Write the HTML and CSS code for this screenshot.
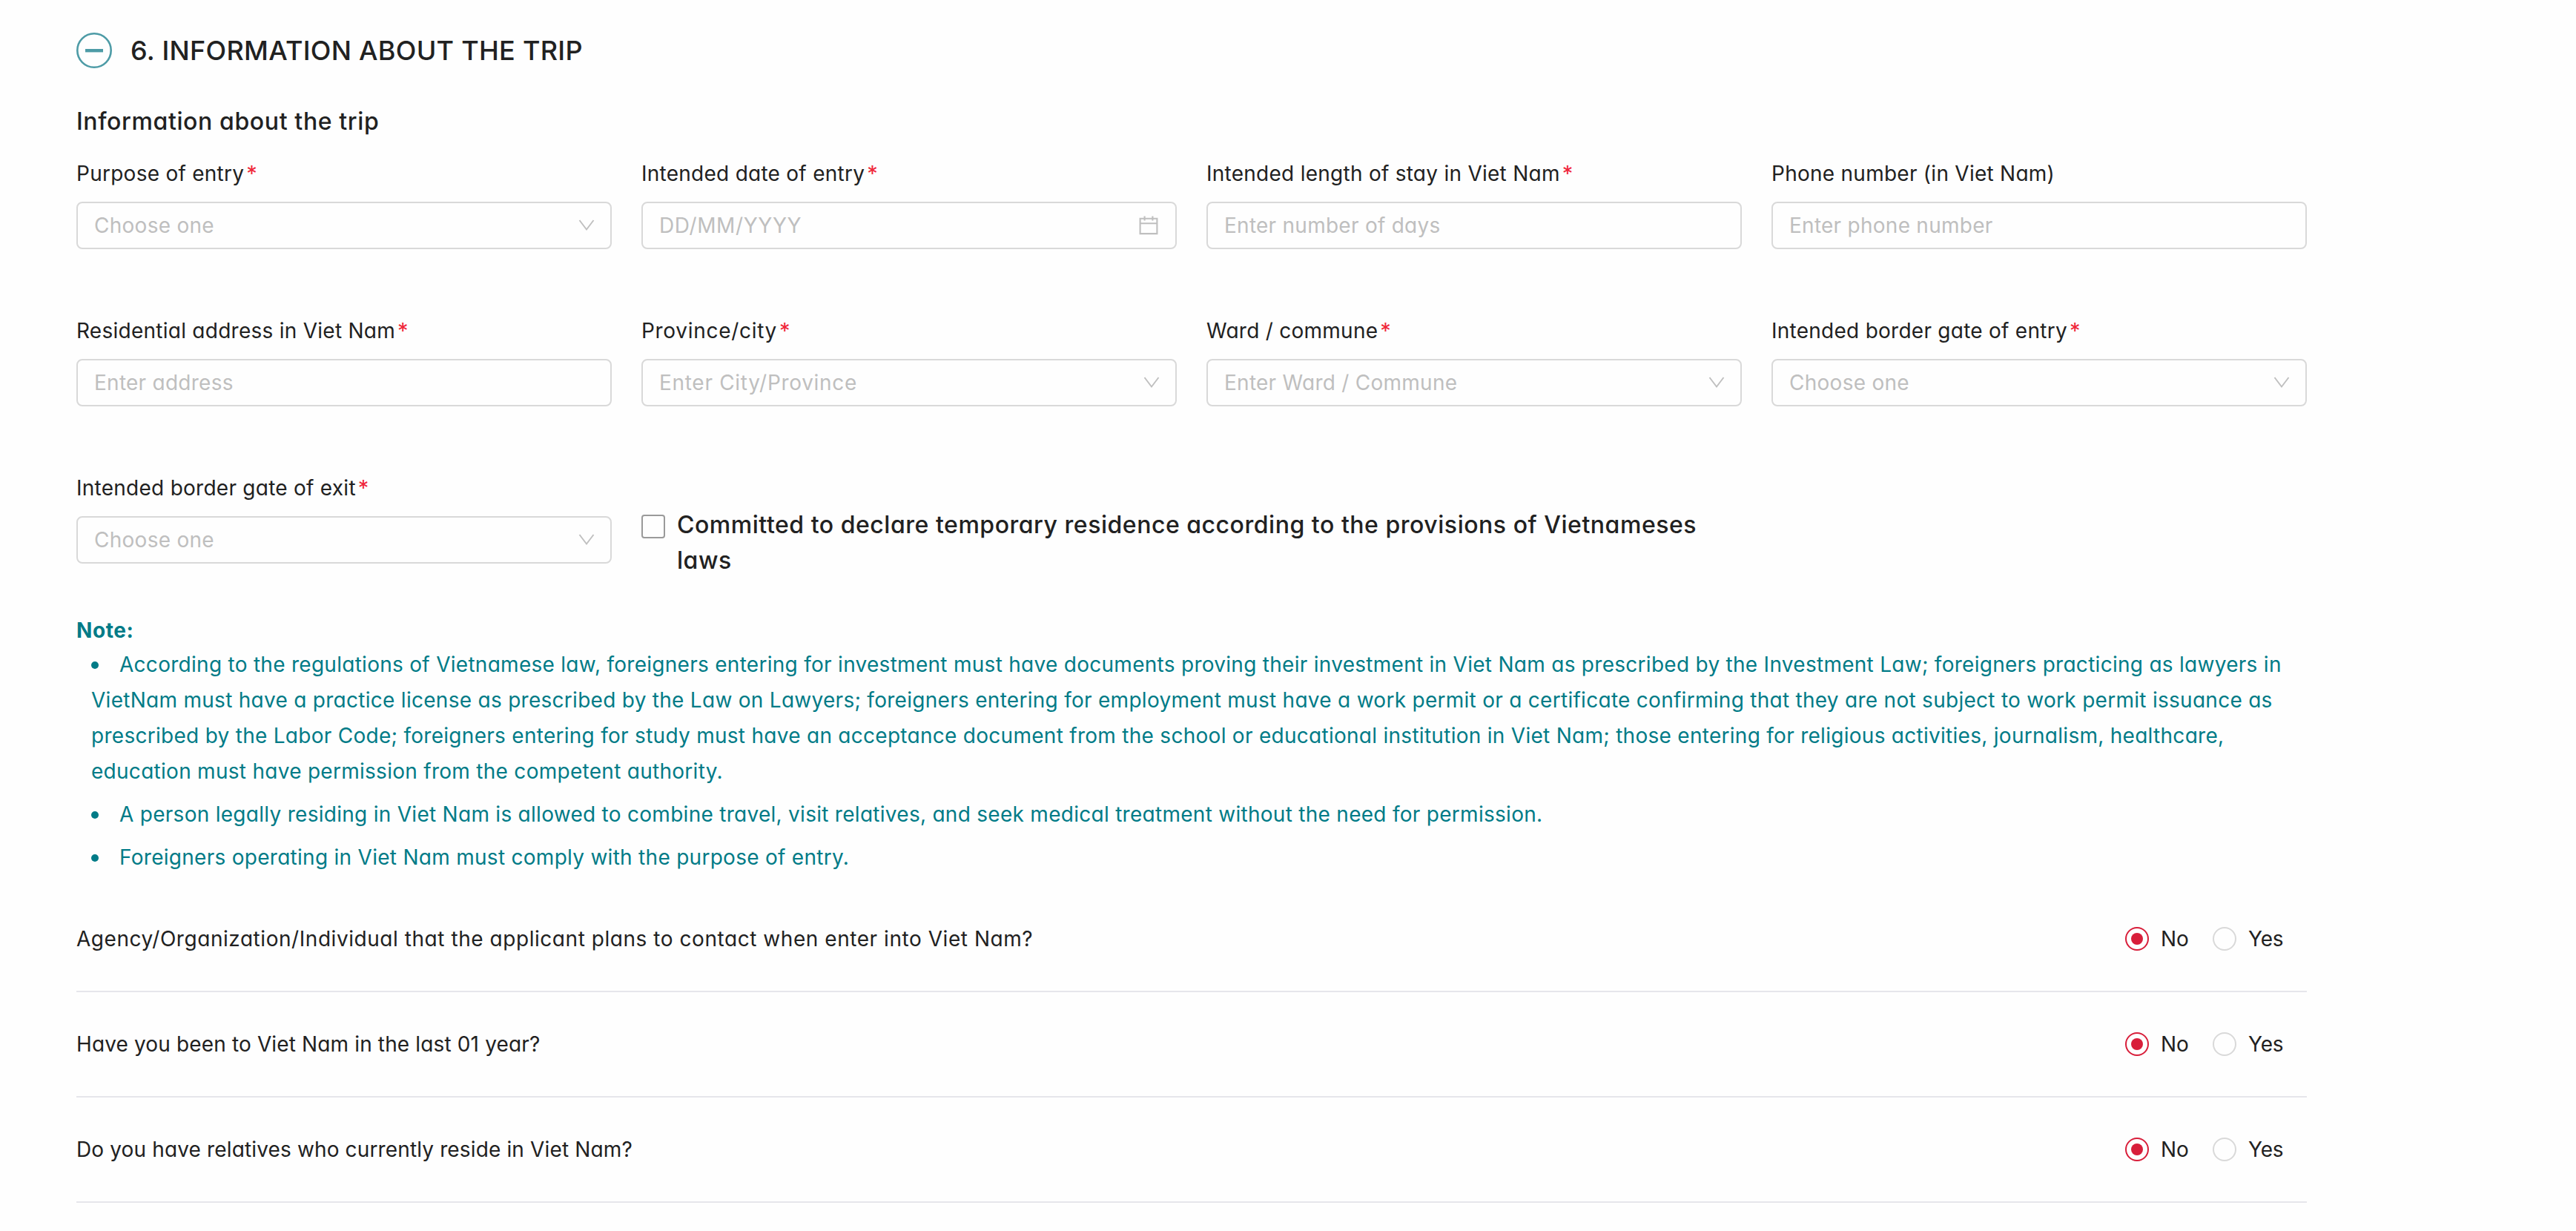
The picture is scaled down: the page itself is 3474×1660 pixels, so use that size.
FILE: index.html
```
<!DOCTYPE html>
<html lang="en">
<head>
    <meta charset="UTF-8">
    <meta name="viewport" content="width=device-width, initial-scale=1.0">
    <title>Information about the trip</title>
    <link rel="stylesheet" href="styles.css">
</head>
<body>
    <svg class="sprite" aria-hidden="true">
        <symbol id="icon-down" viewBox="0 0 24 24">
            <path d="M2.5 5 L12 17.5 L21.5 5" fill="none" stroke="currentColor" stroke-width="1.9"/>
        </symbol>
        <symbol id="icon-calendar" viewBox="0 0 28 28">
            <path d="M2.6 4.8 H25.4 V25.1 H2.6 Z M2.6 11.3 H25.4 M8.6 1.5 V7.5 M19.4 1.5 V7.5" fill="none" stroke="currentColor" stroke-width="2.1"/>
        </symbol>
    </svg>

    <div class="container">
        <div class="section-header">
            <svg class="collapse-icon" viewBox="0 0 48 48">
                <circle cx="24" cy="24" r="22.7" fill="none" stroke="currentColor" stroke-width="2.6"/>
                <rect x="12" y="22" width="24" height="4.4" fill="currentColor"/>
            </svg>
            <h2>6. INFORMATION ABOUT THE TRIP</h2>
        </div>

        <h3>Information about the trip</h3>

        <div class="form-grid">
            <div class="field">
                <label>Purpose of entry<span class="required">*</span></label>
                <div class="control"><span class="placeholder">Choose one</span><svg class="icon-down"><use href="#icon-down"/></svg></div>
            </div>
            <div class="field">
                <label>Intended date of entry<span class="required">*</span></label>
                <div class="control"><span class="placeholder date">DD/MM/YYYY</span><svg class="icon-calendar"><use href="#icon-calendar"/></svg></div>
            </div>
            <div class="field">
                <label>Intended length of stay in Viet Nam<span class="required">*</span></label>
                <div class="control"><span class="placeholder">Enter number of days</span></div>
            </div>
            <div class="field">
                <label>Phone number (in Viet Nam)</label>
                <div class="control"><span class="placeholder">Enter phone number</span></div>
            </div>

            <div class="field">
                <label>Residential address in Viet Nam<span class="required">*</span></label>
                <div class="control"><span class="placeholder">Enter address</span></div>
            </div>
            <div class="field">
                <label class="slashed">Province/city<span class="required">*</span></label>
                <div class="control"><span class="placeholder slashed">Enter City/Province</span><svg class="icon-down"><use href="#icon-down"/></svg></div>
            </div>
            <div class="field">
                <label>Ward / commune<span class="required">*</span></label>
                <div class="control"><span class="placeholder">Enter Ward / Commune</span><svg class="icon-down"><use href="#icon-down"/></svg></div>
            </div>
            <div class="field">
                <label>Intended border gate of entry<span class="required">*</span></label>
                <div class="control"><span class="placeholder">Choose one</span><svg class="icon-down"><use href="#icon-down"/></svg></div>
            </div>

            <div class="field">
                <label>Intended border gate of exit<span class="required">*</span></label>
                <div class="control"><span class="placeholder">Choose one</span><svg class="icon-down"><use href="#icon-down"/></svg></div>
            </div>
            <div class="commitment">
                <span class="checkbox"></span>
                <p>Committed to declare temporary residence according to the provisions of Vietnameses laws</p>
            </div>
        </div>

        <div class="note">
            <strong>Note:</strong>
            <ul>
                <li>According to the regulations of Vietnamese law, foreigners entering for investment must have documents proving their investment in Viet Nam as prescribed by the Investment Law; foreigners practicing as lawyers in<br>
                    VietNam must have a practice license as prescribed by the Law on Lawyers; foreigners entering for employment must have a work permit or a certificate confirming that they are not subject to work permit issuance as<br>
                    prescribed by the Labor Code; foreigners entering for study must have an acceptance document from the school or educational institution in Viet Nam; those entering for religious activities, journalism, healthcare,<br>
                    education must have permission from the competent authority.</li>
                <li>A person legally residing in Viet Nam is allowed to combine travel, visit relatives, and seek medical treatment without the need for permission.</li>
                <li>Foreigners operating in Viet Nam must comply with the purpose of entry.</li>
            </ul>
        </div>

        <div class="questions">
            <div class="question">
                <span class="question-text wide">Agency/Organization/Individual that the applicant plans to contact when enter into Viet Nam?</span>
                <div class="radio-group">
                    <div class="radio checked"><span class="circle"></span>No</div>
                    <div class="radio"><span class="circle"></span>Yes</div>
                </div>
            </div>
            <div class="question">
                <span class="question-text">Have you been to Viet Nam in the last 01 year?</span>
                <div class="radio-group">
                    <div class="radio checked"><span class="circle"></span>No</div>
                    <div class="radio"><span class="circle"></span>Yes</div>
                </div>
            </div>
            <div class="question">
                <span class="question-text">Do you have relatives who currently reside in Viet Nam?</span>
                <div class="radio-group">
                    <div class="radio checked"><span class="circle"></span>No</div>
                    <div class="radio"><span class="circle"></span>Yes</div>
                </div>
            </div>
        </div>
    </div>
</body>
</html>
```
FILE: styles.css
```
* {
    box-sizing: border-box;
}

body {
    margin: 0;
    background: #fefefe;
    color: #212121;
    font-family: Inter, "Liberation Sans", sans-serif;
    font-feature-settings: "cv11";
    font-size: 28px;
    letter-spacing: 0.26px;
}

h2, h3, p, ul {
    margin: 0;
    padding: 0;
}

.sprite {
    display: none;
}

.container {
    width: 3111px;
    padding: 44px 0 0 103px;
}

.section-header {
    display: flex;
    align-items: center;
    height: 48px;
    gap: 25px;
}

.collapse-icon {
    width: 48px;
    height: 48px;
    color: #4d9ba6;
}

h2 {
    font-size: 36px;
    font-weight: 500;
    line-height: 48px;
    letter-spacing: 0.28px;
}

h3 {
    margin-top: 48px;
    font-size: 32px;
    font-weight: 500;
    line-height: 48px;
    letter-spacing: 0.62px;
}

.form-grid {
    display: grid;
    grid-template-columns: repeat(4, 722px);
    column-gap: 40px;
    row-gap: 88px;
    margin-top: 24px;
}

.field {
    display: flex;
    flex-direction: column;
    gap: 16px;
}

label {
    display: flex;
    height: 44px;
    line-height: 44px;
}

.required {
    margin-left: 3px;
    color: #f0283c;
    font-size: 29px;
}

.control {
    display: flex;
    align-items: center;
    justify-content: space-between;
    height: 64px;
    padding: 0 22px;
    border: 2px solid #d9d9d9;
    border-radius: 8px;
    color: #bfbfbf;
}

.slashed {
    letter-spacing: 0.7px;
}

.placeholder.date {
    letter-spacing: 0.6px;
}

.icon-down {
    width: 24px;
    height: 24px;
    margin-right: -2px;
}

.icon-calendar {
    width: 28px;
    height: 28px;
}

.commitment {
    grid-column: span 2;
    display: flex;
    gap: 16px;
    padding-top: 48px;
    font-size: 32px;
    font-weight: 500;
    line-height: 48px;
    letter-spacing: 0.53px;
}

.checkbox {
    flex: none;
    width: 32px;
    height: 32px;
    margin-top: 10px;
    border: 2px solid #9a9a9a;
    border-radius: 4px;
}

.note {
    margin-top: 48px;
    color: #007b87;
    letter-spacing: 0.28px;
}

.note strong {
    display: block;
    line-height: 44px;
    letter-spacing: 0.6px;
}

.note ul {
    margin-left: 20px;
    list-style: none;
}

.note li {
    line-height: 48px;
    white-space: nowrap;
}

.note li + li {
    margin-top: 10px;
}

.note li::before {
    content: "";
    display: inline-block;
    width: 10px;
    height: 10px;
    margin-right: 28px;
    border-radius: 50%;
    background: #007b87;
    vertical-align: 4px;
}

.questions {
    margin-top: 16px;
}

.question {
    display: flex;
    align-items: center;
    justify-content: space-between;
    height: 142px;
    border-bottom: 2px solid #e6e6eb;
}

.question-text {
    letter-spacing: 0.14px;
}

.question-text.wide {
    letter-spacing: 0.55px;
}

.radio-group {
    display: flex;
    letter-spacing: -0.2px;
}

.radio {
    display: flex;
    align-items: center;
    gap: 16px;
    width: 127px;
}

.radio.checked {
    width: 118px;
}

.circle {
    display: flex;
    align-items: center;
    justify-content: center;
    width: 32px;
    height: 32px;
    border: 2px solid #d9d9d9;
    border-radius: 50%;
}

.checked .circle {
    border-color: #d81e3a;
}

.checked .circle::after {
    content: "";
    width: 16px;
    height: 16px;
    border-radius: 50%;
    background: #d81e3a;
}
```
